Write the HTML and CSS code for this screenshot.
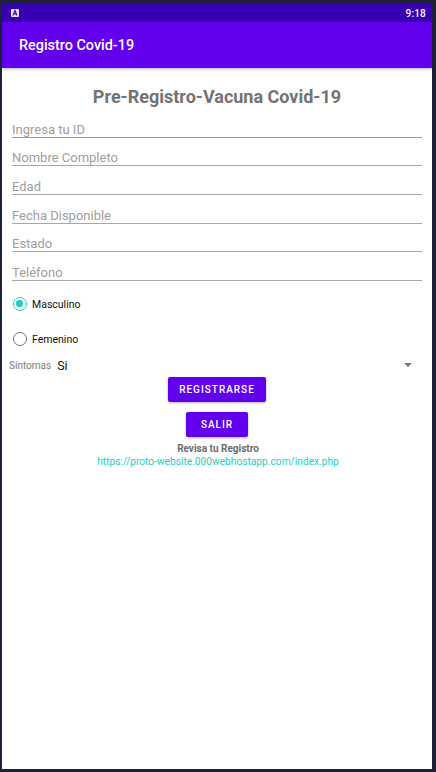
FILE: index.html
```html
<!DOCTYPE html>
<html lang="es">
<head>
<meta charset="utf-8">
<title>Registro Covid-19</title>
<link rel="stylesheet" href="styles.css">
</head>
<body>
<div class="screen">
  <div class="statusbar">
    <span class="sb-icon"><svg width="8" height="8" viewBox="0 0 8 8"><rect x="0" y="0" width="8" height="8" rx="1" fill="#e8e4f6"/><path d="M2 6.5 L4 1.5 L6 6.5 M2.8 4.8 H5.2" stroke="#3a10a8" stroke-width="1.2" fill="none"/></svg></span>
    <span class="time">9:18</span>
  </div>
  <header class="appbar">Registro Covid-19</header>
  <main class="content">
    <h1 class="heading">Pre-Registro-Vacuna Covid-19</h1>
    <div class="field focused">Ingresa tu ID</div>
    <div class="field">Nombre Completo</div>
    <div class="field">Edad</div>
    <div class="field">Fecha Disponible</div>
    <div class="field">Estado</div>
    <div class="field">Teléfono</div>
    <div class="radio checked"><span class="dot"></span><span>Masculino</span></div>
    <div class="radio"><span class="dot"></span><span>Femenino</span></div>
    <div class="spinner">
      <span class="sp-label">Síntomas</span>
      <span class="sp-value">Si</span>
      <span class="sp-arrow"></span>
    </div>
    <div class="buttons">
      <button class="btn">REGISTRARSE</button>
      <button class="btn">SALIR</button>
    </div>
    <p class="revisa">Revisa tu Registro</p>
    <p class="link">https://proto-website.000webhostapp.com/index.php</p>
  </main>
</div>
</body>
</html>
```
FILE: styles.css
```css
* { box-sizing: border-box; }
html, body { margin: 0; height: 100%; }
body {
  background: #1f2237;
  padding: 4px 4px 3px 2px;
  font-family: Roboto, "Noto Sans", sans-serif;
}
.screen {
  background: #fff;
  height: 100%;
  display: flex;
  flex-direction: column;
}
.statusbar {
  height: 18px;
  background: #3700b3;
  display: flex;
  align-items: center;
  justify-content: space-between;
  padding: 0 6px 0 9px;
  color: #fff;
}
.sb-icon { display: flex; }
.time { font-size: 10px; font-weight: 500; letter-spacing: 0.2px; }
.appbar {
  height: 46px;
  background: #6200ee;
  color: #fff;
  font-size: 14.4px;
  font-weight: 500;
  display: flex;
  align-items: center;
  padding-left: 17px;
  padding-top: 1px;
  box-shadow: 0 1px 3px rgba(0,0,0,0.3);
  position: relative;
}
.content {
  padding: 0 10px 0 10px;
  display: flex;
  flex-direction: column;
}
.heading {
  margin: 18px 0 0;
  text-align: center;
  font-size: 18px;
  font-weight: 700;
  color: #737373;
  line-height: 22px;
}
.field {
  font-size: 13px;
  color: #9e9e9e;
  line-height: 14px;
  border-bottom: 1.5px solid #a8a8a8;
  height: 28.7px;
  display: flex;
  align-items: flex-end;
}
.heading + .field { margin-top: 1px; }
.field.focused { border-bottom-color: #1ecfc0; }
.radio {
  display: flex;
  align-items: center;
  gap: 5px;
  font-size: 10.5px;
  color: #111;
  height: 16px;
  margin-left: 1px;
}
.field + .radio { margin-top: 15px; }
.radio + .radio { margin-top: 19px; }
.dot {
  width: 14px;
  height: 14px;
  border-radius: 50%;
  border: 1.6px solid #757575;
  display: inline-block;
  position: relative;
}
.radio.checked .dot { border-color: #1ecfc0; }
.radio.checked .dot::after {
  content: "";
  position: absolute;
  left: 2.2px; top: 2.2px;
  width: 6.4px; height: 6.4px;
  border-radius: 50%;
  background: #1ecfc0;
}
.spinner {
  display: flex;
  align-items: center;
  margin-top: 10px;
  margin-left: -3px;
  height: 16px;
}
.sp-label { font-size: 10px; color: #7a7a7a; }
.sp-value { font-size: 12.5px; color: #111; margin-left: 6px; flex: 1; }
.sp-arrow {
  width: 0; height: 0;
  border-left: 4px solid transparent;
  border-right: 4px solid transparent;
  border-top: 4px solid #757575;
  margin-right: 10px;
}
.buttons {
  display: flex;
  flex-direction: column;
  align-items: center;
  gap: 10px;
  margin-top: 4px;
  margin-left: 0px;
}
.btn {
  background: #6200ee;
  color: #fff;
  border: none;
  border-radius: 2px;
  font-family: Roboto, sans-serif;
  font-size: 10px;
  font-weight: 500;
  letter-spacing: 1px;
  height: 25px;
  padding: 0 11px;
  box-shadow: 0 1px 3px rgba(0,0,0,0.3);
}
.btn + .btn { padding: 0 15px; }
.revisa {
  margin: 6px 0 0;
  text-align: center;
  font-size: 10px;
  font-weight: 700;
  color: #6b6b6b;
  line-height: 12px;
  padding-left: 2px;
}
.link {
  margin: 1px 0 0;
  text-align: center;
  font-size: 10.2px;
  color: #1ecfc0;
  line-height: 12px;
  padding-left: 2px;
}
```
